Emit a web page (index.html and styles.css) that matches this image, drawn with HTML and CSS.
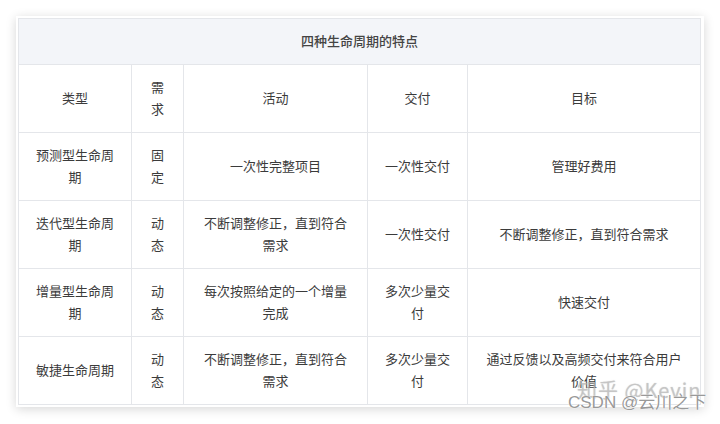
FILE: index.html
```html
<!DOCTYPE html>
<html lang="zh">
<head>
<meta charset="utf-8">
<link rel="stylesheet" href="styles.css">
</head>
<body>
<div class="page">
  <div class="card">
    <table class="grid">
      <colgroup>
        <col class="c1"><col class="c2"><col class="c3"><col class="c4"><col class="c5">
      </colgroup>
      <tr class="title-row"><th colspan="5">四种生命周期的特点</th></tr>
      <tr><td>类型</td><td>需求</td><td>活动</td><td>交付</td><td>目标</td></tr>
      <tr><td>预测型生命周期</td><td>固定</td><td>一次性完整项目</td><td>一次性交付</td><td>管理好费用</td></tr>
      <tr><td>迭代型生命周期</td><td>动态</td><td>不断调整修正，直到符合需求</td><td>一次性交付</td><td>不断调整修正，直到符合需求</td></tr>
      <tr><td>增量型生命周期</td><td>动态</td><td>每次按照给定的一个增量完成</td><td>多次少量交付</td><td>快速交付</td></tr>
      <tr><td>敏捷生命周期</td><td>动态</td><td>不断调整修正，直到符合需求</td><td>多次少量交付</td><td>通过反馈以及高频交付来符合用户价值</td></tr>
    </table>
  </div>
  <div class="watermark">
    <span class="wm-zhihu">知乎 @Kevin</span>
    <span class="wm-csdn">CSDN @云川之下</span>
  </div>
</div>
</body>
</html>
```
FILE: styles.css
```css
html, body {
  margin: 0;
  padding: 0;
  background: #ffffff;
}
body {
  width: 720px;
  height: 424px;
  overflow: hidden;
  font-family: "Noto Sans CJK SC", "Noto Sans", sans-serif;
}
.page {
  position: relative;
  padding: 16px;
  width: 688px;
}
.card {
  background: #fff;
  padding: 2px;
  box-shadow: 0 2px 10px rgba(0,0,0,0.16);
  width: 684px;
}
.grid {
  border-collapse: collapse;
  table-layout: fixed;
  width: 682px;
  font-size: 13px;
  line-height: 22px;
  color: #3b3b3b;
}
.c1 { width: 113px; }
.c2 { width: 52px; }
.c3 { width: 184px; }
.c4 { width: 100px; }
.c5 { width: 233px; }
.grid th, .grid td {
  border: 1px solid #e4e6ea;
  text-align: center;
  vertical-align: middle;
  padding: 0 16px 2px;
}
.grid tr { height: 68px; }
.grid tr.title-row { height: 46px; }
.grid th {
  background: #f3f5f9;
  font-weight: 500;
  color: #444;
}
.watermark {
  position: absolute;
  right: 16px;
  bottom: 8px;
  width: 136px;
  height: 34px;
}
.wm-zhihu {
  position: absolute;
  left: 9px;
  top: -2px;
  font-size: 20px;
  line-height: 22px;
  color: rgba(190,190,190,0.6);
  font-family: "Noto Sans CJK SC", sans-serif;
  letter-spacing: 1px;
  white-space: nowrap;
  text-shadow: 0 0 1px rgba(150,150,150,0.5);
}
.wm-csdn {
  position: absolute;
  left: 0;
  top: 12px;
  font-size: 17px;
  line-height: 20px;
  color: rgba(125,125,125,0.8);
  font-family: "Liberation Sans", "Noto Sans CJK SC", sans-serif;
  text-shadow: 0 0 1px #fff, 0 0 1px #fff;
  white-space: nowrap;
}
```
